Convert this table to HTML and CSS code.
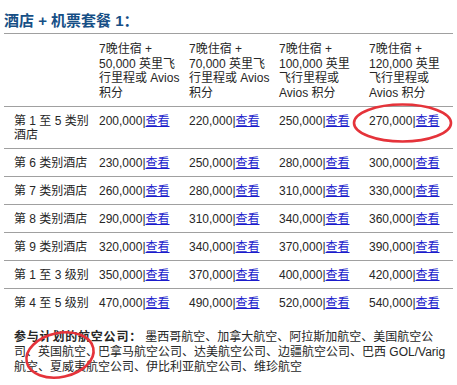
FILE: index.html
```html
<!DOCTYPE html>
<html lang="zh-CN">
<head>
<meta charset="utf-8">
<link rel="stylesheet" href="styles.css">
</head>
<body>
<div class="page">
  <h2 class="title">酒店 + 机票套餐 1：</h2>
  <table class="pack">
    <colgroup><col class="c1"><col class="c"><col class="c"><col class="c"><col class="c5"></colgroup>
    <thead>
      <tr>
        <th></th>
        <th>7晚住宿 +<br>50,000 英里飞<br>行里程或 Avios<br>积分</th>
        <th>7晚住宿 +<br>70,000 英里飞<br>行里程或 Avios<br>积分</th>
        <th>7晚住宿 +<br>100,000 英里<br>飞行里程或<br>Avios 积分</th>
        <th>7晚住宿 +<br>120,000 英里<br>飞行里程或<br>Avios 积分</th>
      </tr>
    </thead>
    <tbody>
      <tr><td>第 1 至 5 类别<br>酒店</td><td>200,000|<a href="#">查看</a></td><td>220,000|<a href="#">查看</a></td><td>250,000|<a href="#">查看</a></td><td>270,000|<a href="#">查看</a></td></tr>
      <tr><td>第 6 类别酒店</td><td>230,000|<a href="#">查看</a></td><td>250,000|<a href="#">查看</a></td><td>280,000|<a href="#">查看</a></td><td>300,000|<a href="#">查看</a></td></tr>
      <tr><td>第 7 类别酒店</td><td>260,000|<a href="#">查看</a></td><td>280,000|<a href="#">查看</a></td><td>310,000|<a href="#">查看</a></td><td>330,000|<a href="#">查看</a></td></tr>
      <tr><td>第 8 类别酒店</td><td>290,000|<a href="#">查看</a></td><td>310,000|<a href="#">查看</a></td><td>340,000|<a href="#">查看</a></td><td>360,000|<a href="#">查看</a></td></tr>
      <tr><td>第 9 类别酒店</td><td>320,000|<a href="#">查看</a></td><td>340,000|<a href="#">查看</a></td><td>370,000|<a href="#">查看</a></td><td>390,000|<a href="#">查看</a></td></tr>
      <tr><td>第 1 至 3 级别</td><td>350,000|<a href="#">查看</a></td><td>370,000|<a href="#">查看</a></td><td>400,000|<a href="#">查看</a></td><td>420,000|<a href="#">查看</a></td></tr>
      <tr><td>第 4 至 5 级别</td><td>470,000|<a href="#">查看</a></td><td>490,000|<a href="#">查看</a></td><td>520,000|<a href="#">查看</a></td><td>540,000|<a href="#">查看</a></td></tr>
    </tbody>
  </table>
  <p class="airlines"><b>参与计划的航空公司：</b> 墨西哥航空、加拿大航空、阿拉斯加航空、美国航空公<br>司、英国航空、巴拿马航空公司、达美航空公司、边疆航空公司、巴西 GOL/Varig<br>航空、夏威夷航空公司、伊比利亚航空公司、维珍航空</p>
  <svg class="marks" width="457" height="385" viewBox="0 0 457 385">
    <ellipse cx="402.5" cy="123" rx="48.5" ry="18.5" fill="none" stroke="#e5333a" stroke-width="2.6"/>
    <ellipse cx="60" cy="355" rx="34" ry="22" transform="rotate(-12 60 355)" fill="none" stroke="#e5333a" stroke-width="2.6"/>
  </svg>
</div>
</body>
</html>
```

FILE: styles.css
```css
html, body {
  margin: 0;
  padding: 0;
  background: #fff;
}
.page {
  position: relative;
  width: 457px;
  height: 385px;
  overflow: hidden;
  font-family: "Liberation Sans", "Noto Sans CJK SC", sans-serif;
  font-size: 12px;
  color: #262626;
}
.title {
  margin: 11px 4px 0 4px;
  padding: 0 0 2px 0;
  height: 20px;
  line-height: 20px;
  font-size: 15px;
  font-weight: bold;
  color: #164f86;
  border-bottom: 1px solid #a0a0a0;
}
.pack {
  margin: 0 0 0 4px;
  width: 449px;
  border-collapse: collapse;
  table-layout: fixed;
}
.pack .c1 { width: 90px; }
.pack .c { width: 90px; }
.pack .c5 { width: 89px; }
.pack th {
  font-weight: normal;
  text-align: left;
  vertical-align: top;
  line-height: 14.5px;
  padding: 8px 0 6px 5px;
  border-bottom: 1px solid #a0a0a0;
  white-space: nowrap;
}
.pack td {
  vertical-align: top;
  line-height: 14px;
  padding: 7px 0 6px 5px;
  border-bottom: 1px solid #a0a0a0;
  white-space: nowrap;
}
.pack th:first-child,
.pack td:first-child {
  padding-left: 10px;
}
.pack tbody tr:last-child td {
  border-bottom: none;
}
.pack a {
  color: #1c1ccc;
  text-decoration: underline;
}
.airlines {
  margin: 14px 0 0 14px;
  line-height: 15px;
  white-space: nowrap;
}
.airlines b {
  font-weight: bold;
  letter-spacing: 0.8px;
}
.marks {
  position: absolute;
  left: 0;
  top: 0;
  pointer-events: none;
}
```
